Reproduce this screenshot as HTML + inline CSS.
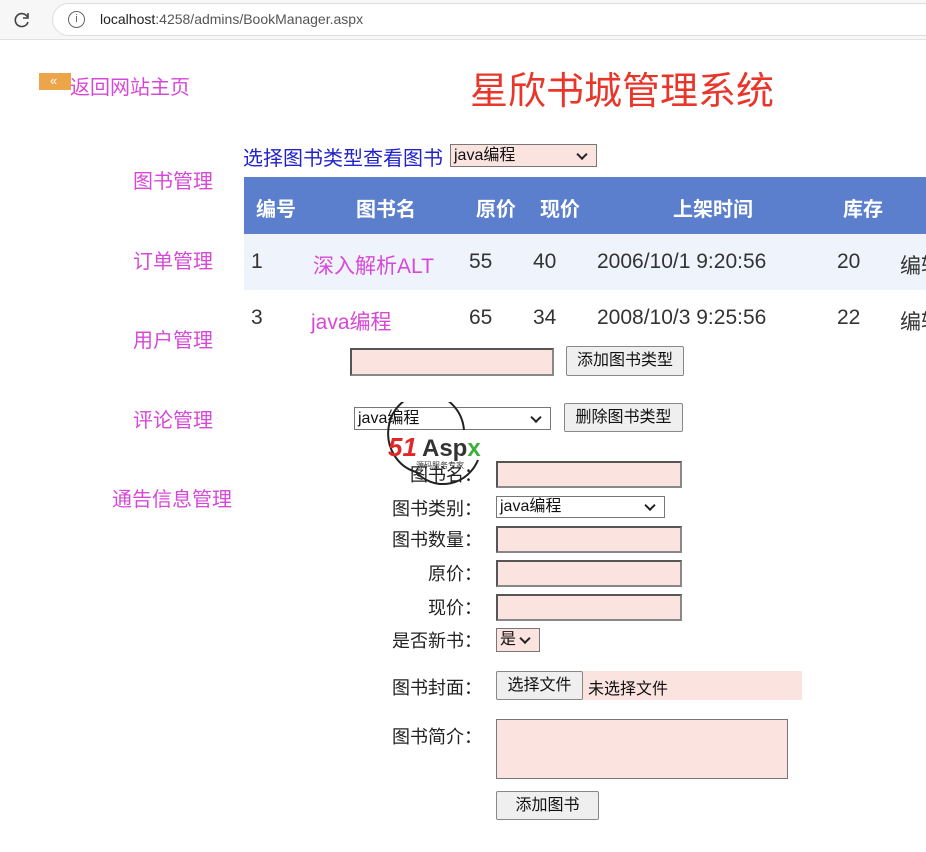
<!DOCTYPE html>
<html><head><meta charset="utf-8"><style>
*{margin:0;padding:0;box-sizing:border-box}
body{width:926px;height:852px;overflow:hidden;background:#fff;font-family:"Liberation Sans","Noto Sans CJK SC",sans-serif;position:relative;color:#222;white-space:nowrap}
.a{position:absolute;white-space:nowrap}
.nav{color:#d848d8;font-size:20px}
.inp{position:absolute;background:#fbe4e0;border:2px solid #555;border-right-color:#888;border-bottom-color:#888}
.btn{position:absolute;background:#efefef;border:1px solid #888;border-radius:2px;font-size:16px;text-align:center;color:#111}
.sel{position:absolute;background:#fff;border:1px solid #777;font-size:16px;padding-left:3px;color:#111}
.sel:after{content:"";position:absolute;right:10px;top:50%;width:6px;height:6px;border-right:2px solid #222;border-bottom:2px solid #222;transform:translateY(-70%) rotate(45deg)}
.lbl{position:absolute;font-size:18px;color:#222;text-align:right;white-space:nowrap;right:444px}
.th{position:absolute;color:#fff;font-weight:bold;font-size:20px;top:193px}
.td{position:absolute;font-size:21px;color:#333}
</style></head><body>
<div class="a" style="left:0;top:0;width:926px;height:40px;background:#f7f7f8;border-bottom:1px solid #e2e2e2"></div>
<svg class="a" style="left:12px;top:10px" width="20" height="20" viewBox="0 0 20 20"><path d="M15.5 7A6.5 6.5 0 1 0 16 12" fill="none" stroke="#444" stroke-width="1.6"/><path d="M16 3v5h-5" fill="none" stroke="#444" stroke-width="1.6"/></svg>
<div class="a" style="left:52px;top:3px;width:900px;height:33px;border-radius:17px;background:#fff;border:1px solid #ddd"></div>
<div class="a" style="left:68px;top:11px;width:17px;height:17px;border:1.5px solid #666;border-radius:50%;font-size:11px;text-align:center;line-height:14px;color:#666">i</div>
<div class="a" style="left:100px;top:11px;font-size:14px;color:#222">localhost<span style="color:#555">:4258/admins/BookManager.aspx</span></div>

<div class="a" style="left:39px;top:73px;width:32px;height:17px;background:#eda54a;color:#fff;font-size:13px;line-height:16px;padding-left:11px">«</div>
<div class="a nav" style="left:70px;top:71px">返回网站主页</div>
<div class="a" style="left:470px;top:60px;font-size:38px;color:#e8372a">星欣书城管理系统</div>

<div class="a nav" style="left:133px;top:165px">图书管理</div>
<div class="a nav" style="left:133px;top:245px">订单管理</div>
<div class="a nav" style="left:133px;top:324px">用户管理</div>
<div class="a nav" style="left:133px;top:404px">评论管理</div>
<div class="a nav" style="left:112px;top:483px">通告信息管理</div>

<div class="a" style="left:243px;top:142px;font-size:20px;color:#2222cc">选择图书类型查看图书</div>
<div class="sel" style="left:450px;top:144px;width:147px;height:23px;background:#fbe4e0;line-height:21px">java编程</div>

<div class="a" style="left:244px;top:177px;width:682px;height:57px;background:#5b7fcd"></div>
<div class="a" style="left:244px;top:234px;width:682px;height:56px;background:#eff3fb"></div>
<div class="th" style="left:256px">编号</div>
<div class="th" style="left:356px">图书名</div>
<div class="th" style="left:476px">原价</div>
<div class="th" style="left:540px">现价</div>
<div class="th" style="left:673px">上架时间</div>
<div class="th" style="left:843px">库存</div>

<div class="td" style="left:251px;top:250px">1</div>
<div class="td" style="left:313px;top:250px;color:#d848d8">深入解析ALT</div>
<div class="td" style="left:469px;top:250px">55</div>
<div class="td" style="left:533px;top:250px">40</div>
<div class="td" style="left:597px;top:250px">2006/10/1 9:20:56</div>
<div class="td" style="left:837px;top:250px">20</div>
<div class="td" style="left:900px;top:250px">编辑</div>
<div class="td" style="left:251px;top:306px">3</div>
<div class="td" style="left:311px;top:306px;color:#d848d8">java编程</div>
<div class="td" style="left:469px;top:306px">65</div>
<div class="td" style="left:533px;top:306px">34</div>
<div class="td" style="left:597px;top:306px">2008/10/3 9:25:56</div>
<div class="td" style="left:837px;top:306px">22</div>
<div class="td" style="left:900px;top:306px">编辑</div>

<div class="inp" style="left:350px;top:348px;width:204px;height:28px"></div>
<div class="btn" style="left:566px;top:346px;width:118px;height:30px;line-height:28px">添加图书类型</div>
<div class="sel" style="left:354px;top:407px;width:197px;height:23px;line-height:21px">java编程</div>
<div class="btn" style="left:564px;top:403px;width:119px;height:29px;line-height:27px">删除图书类型</div>

<svg class="a" style="left:386px;top:402px" width="130" height="92" viewBox="0 0 130 92">
<path d="M30 70 A38 40 0 1 1 78 28" fill="none" stroke="#222" stroke-width="2"/>
<path d="M30 70 A38 40 0 0 0 92 58" fill="none" stroke="#222" stroke-width="2"/>
<text x="2" y="54" font-family="Liberation Sans" font-weight="bold" font-style="italic" font-size="26" fill="#e02828">51</text>
<text x="36" y="54" font-family="Liberation Sans" font-weight="bold" font-size="24" fill="#333">Asp<tspan fill="#3cae3c">x</tspan></text>
<text x="30" y="66" font-family="Noto Sans CJK SC" font-size="8" fill="#333">源码服务专家</text>
</svg>

<div class="lbl" style="top:461px">图书名：</div>
<div class="inp" style="left:496px;top:461px;width:186px;height:27px"></div>
<div class="lbl" style="top:495px">图书类别：</div>
<div class="sel" style="left:496px;top:496px;width:169px;height:22px;line-height:20px">java编程</div>
<div class="lbl" style="top:526px">图书数量：</div>
<div class="inp" style="left:496px;top:526px;width:186px;height:27px"></div>
<div class="lbl" style="top:560px">原价：</div>
<div class="inp" style="left:496px;top:560px;width:186px;height:27px"></div>
<div class="lbl" style="top:594px">现价：</div>
<div class="inp" style="left:496px;top:594px;width:186px;height:27px"></div>
<div class="lbl" style="top:627px">是否新书：</div>
<div class="sel" style="left:496px;top:628px;width:44px;height:24px;background:#fbe4e0;font-size:16px;line-height:22px">是</div>
<div class="lbl" style="top:674px">图书封面：</div>
<div class="a" style="left:496px;top:671px;width:306px;height:29px;background:#fbe4e0"></div>
<div class="btn" style="left:496px;top:671px;width:87px;height:29px;line-height:27px">选择文件</div>
<div class="a" style="left:588px;top:675px;font-size:16px;color:#111">未选择文件</div>
<div class="lbl" style="top:723px">图书简介：</div>
<div class="a" style="left:496px;top:719px;width:292px;height:60px;background:#fbe4e0;border:1px solid #777"></div>
<div class="btn" style="left:496px;top:791px;width:103px;height:29px;line-height:27px">添加图书</div>
</body></html>
